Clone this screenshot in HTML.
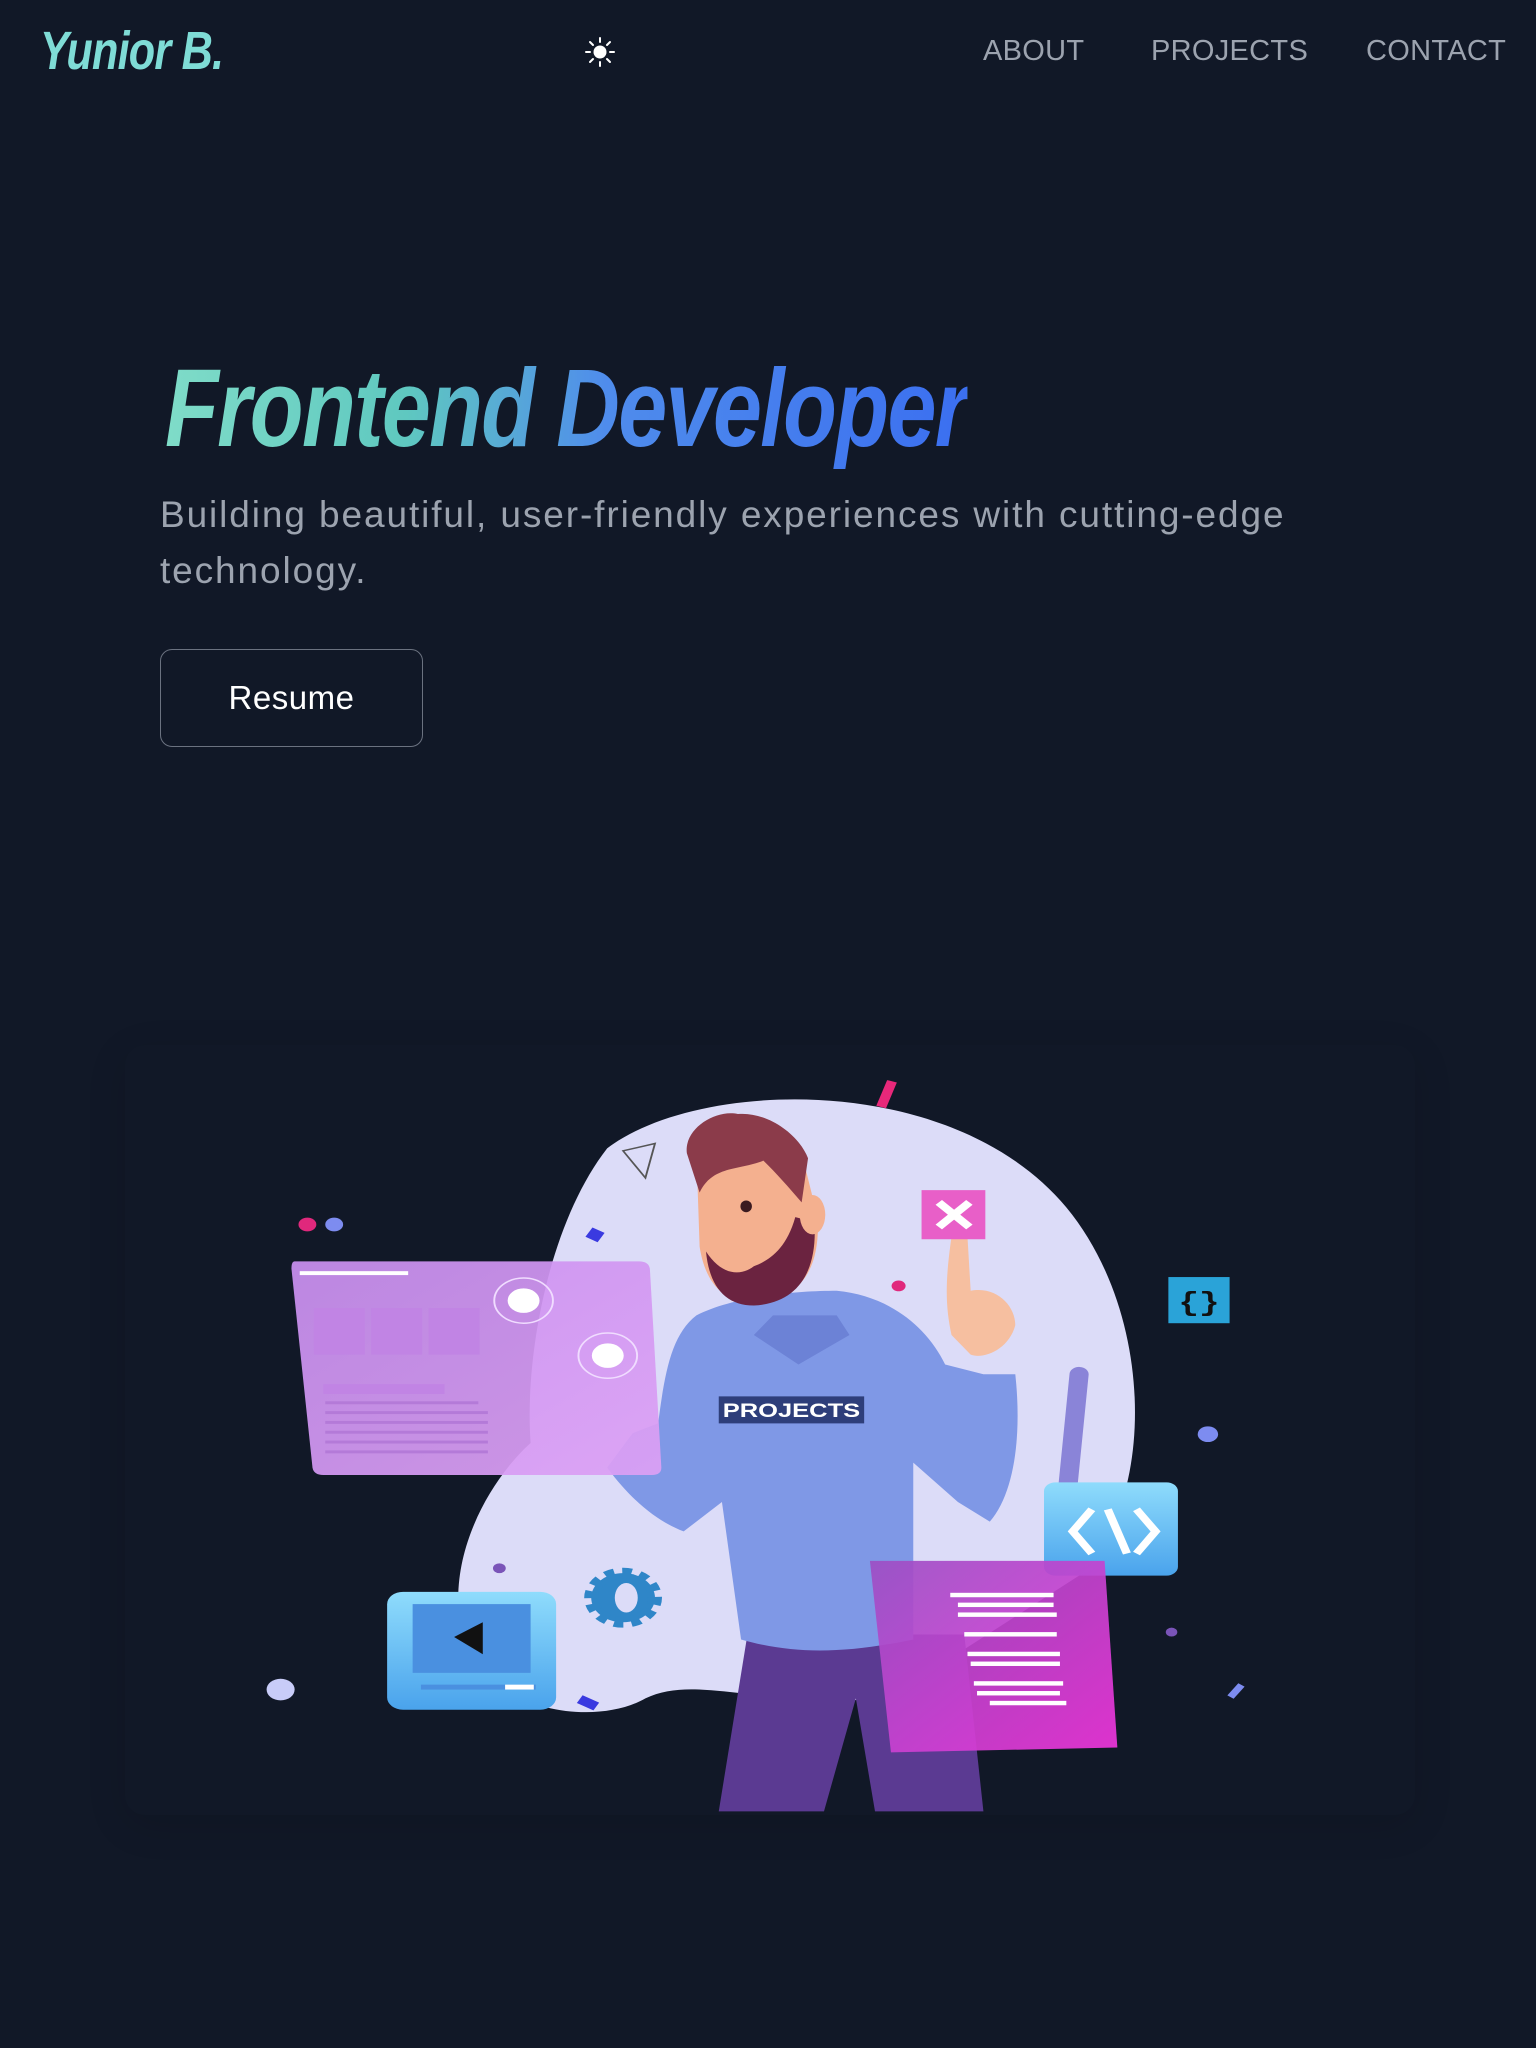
<!DOCTYPE html>
<html><head><meta charset="utf-8"><style>
html,body{margin:0;padding:0;background:#111827;width:1536px;height:2048px;overflow:hidden;font-family:"Liberation Sans",sans-serif}
.abs{position:absolute}
.logo{left:40px;top:20px;font-size:54px;font-weight:bold;font-style:italic;color:#7fdcd6;transform:scaleX(0.8);transform-origin:left;white-space:nowrap;letter-spacing:-1px}
.nav{top:35px;font-size:29px;color:#9ca3af;letter-spacing:0.3px}
.h1{left:165px;top:345px;font-size:110px;font-weight:bold;font-style:italic;white-space:nowrap;transform:scaleX(0.8);transform-origin:left;letter-spacing:-2px;
background:linear-gradient(90deg,#7fdcc8 0%,#5fc8c0 30%,#4f8cec 55%,#3b6ff0 100%);-webkit-background-clip:text;background-clip:text;color:transparent}
.sub{left:160px;top:487px;width:1250px;font-size:37px;line-height:56px;color:#9ca3af;letter-spacing:1.9px}
.btn{left:160px;top:649px;width:263px;height:98px;border:1.5px solid #6b7280;border-radius:12px;color:#fff;font-size:33px;display:flex;align-items:center;justify-content:center;box-sizing:border-box;letter-spacing:0.5px}
</style></head><body>
<div class="abs logo">Yunior B.</div>
<svg class="abs" style="left:584px;top:36px" width="32" height="32" viewBox="0 0 32 32"><g stroke="#fff" stroke-width="2" stroke-linecap="round"><line x1="16" y1="2" x2="16" y2="6"/><line x1="16" y1="26" x2="16" y2="30"/><line x1="2" y1="16" x2="6" y2="16"/><line x1="26" y1="16" x2="30" y2="16"/><line x1="6" y1="6" x2="9" y2="9"/><line x1="23" y1="23" x2="26" y2="26"/><line x1="6" y1="26" x2="9" y2="23"/><line x1="23" y1="9" x2="26" y2="6"/></g><circle cx="16" cy="16" r="6.5" fill="#fff"/></svg>
<div class="abs nav" style="left:983px">ABOUT</div>
<div class="abs nav" style="left:1151px">PROJECTS</div>
<div class="abs nav" style="left:1366px">CONTACT</div>
<div class="abs h1">Frontend Developer</div>
<div class="abs sub">Building beautiful, user-friendly experiences with cutting-edge technology.</div>
<div class="abs btn">Resume</div>
<div class="abs" style="left:125px;top:1045px;width:1290px;height:770px;border-radius:20px;box-shadow:0 10px 40px rgba(0,0,0,0.12)"></div>
<svg class="abs" style="left:250px;top:1060px" width="1000" height="770" viewBox="0 0 1568 1568" preserveAspectRatio="none">
<defs>
<linearGradient id="lp" x1="0" y1="0" x2="1" y2="1"><stop offset="0" stop-color="#c98ff0"/><stop offset="1" stop-color="#dca0f4"/></linearGradient>
<linearGradient id="pd" x1="0" y1="0" x2="1" y2="1"><stop offset="0" stop-color="#9c4fc4"/><stop offset="1" stop-color="#f035dc"/></linearGradient>
<linearGradient id="bl" x1="0" y1="0" x2="0" y2="1"><stop offset="0" stop-color="#8fdcfc"/><stop offset="1" stop-color="#4aa3ec"/></linearGradient>
</defs>
<path d="M560,180 C700,40 1100,20 1280,300 C1420,520 1420,900 1300,1050 L1000,1300 C800,1320 700,1250 620,1300 C540,1360 360,1330 330,1150 C310,1000 380,850 440,780 C430,600 470,330 560,180 Z" fill="#dcdcf8"/>
<rect x="990" y="42" width="16" height="55" fill="#e8287a" transform="rotate(18 998 70)"/>
<path d="M585,185 L635,170 L620,240 Z" fill="none" stroke="#555" stroke-width="3"/>
<circle cx="90" cy="335" r="14" fill="#e0287c"/><circle cx="132" cy="335" r="14" fill="#7d8cf0"/>
<rect x="530" y="345" width="22" height="22" fill="#3a3ae0" transform="rotate(30 541 356)"/>
<circle cx="1017" cy="460" r="11" fill="#e0287c"/>
<path d="M780,1170 L1120,1170 L1150,1530 L980,1530 L950,1300 L900,1530 L735,1530 Z" fill="#5b3a92"/>
<path d="M700,520 C760,480 860,470 920,470 C1000,480 1060,540 1090,620 L1150,640 L1200,640 C1210,760 1200,880 1160,940 L1110,900 L1040,820 L1040,1180 C930,1210 850,1210 770,1180 L740,900 L680,960 C640,940 600,900 560,830 L600,760 L640,740 C650,640 660,560 700,520 Z" fill="#7f98e6"/>
<path d="M790,560 L860,620 L940,560 L920,520 L820,520 Z" fill="#6c82d6"/>
<path d="M700,190 C740,130 840,130 865,190 L890,320 C895,430 860,490 790,495 C735,495 712,440 705,380 Z" fill="#f4b08f"/>
<path d="M685,190 C680,140 730,100 765,110 C810,105 860,150 875,200 L865,290 C845,260 825,230 805,205 C765,225 725,215 705,270 Z" fill="#8b3b4a"/>
<path d="M715,390 C740,440 770,440 790,420 C810,410 840,390 855,320 L885,330 C890,430 860,495 790,500 C745,500 720,460 715,390 Z" fill="#6b2340"/>
<ellipse cx="882" cy="315" rx="20" ry="40" fill="#f4b08f"/>
<ellipse cx="778" cy="298" rx="9" ry="12" fill="#3a1a20"/>
<rect x="735" y="685" width="228" height="55" fill="#2e3e7a"/>
<text x="849" y="727" font-family="Liberation Sans" font-weight="bold" font-size="40" fill="#fff" text-anchor="middle">PROJECTS</text>
<path d="M1100,360 L1125,360 L1130,470 C1170,460 1200,500 1200,540 C1190,590 1150,610 1130,600 L1100,560 C1090,500 1090,450 1100,360 Z" fill="#f6bfa0"/>
<rect x="1053" y="265" width="100" height="100" fill="#e85fc8"/>
<path d="M1080,290 L1128,340 M1128,290 L1080,340" stroke="#fff" stroke-width="14"/>
<path d="M70,410 L610,410 Q625,410 627,425 L645,830 Q645,845 630,845 L115,845 Q100,845 98,830 L65,425 Q65,410 70,410 Z" fill="url(#lp)" opacity="0.93"/>
<rect x="78" y="430" width="170" height="8" fill="#fff"/>
<rect x="100" y="505" width="80" height="95" fill="#c184e4"/><rect x="190" y="505" width="80" height="95" fill="#c184e4"/><rect x="280" y="505" width="80" height="95" fill="#c184e4"/>
<rect x="115" y="660" width="190" height="20" fill="#c184e4"/>
<g fill="#b47ad8"><rect x="118" y="695" width="240" height="6"/><rect x="118" y="715" width="255" height="6"/><rect x="118" y="735" width="255" height="6"/><rect x="118" y="755" width="255" height="6"/><rect x="118" y="775" width="255" height="6"/><rect x="118" y="795" width="255" height="6"/></g>
<circle cx="429" cy="490" r="46" fill="none" stroke="#f0dcff" stroke-width="3"/><circle cx="429" cy="490" r="25" fill="#fff"/>
<circle cx="561" cy="602" r="46" fill="none" stroke="#f0dcff" stroke-width="3"/><circle cx="561" cy="602" r="25" fill="#fff"/>
<rect x="1440" y="442" width="96" height="94" fill="#2aa3d8"/>
<text x="1488" y="510" font-family="Liberation Mono" font-weight="bold" font-size="54" fill="#111" text-anchor="middle">{}</text>
<circle cx="1502" cy="762" r="16" fill="#7d8cf0"/>
<path d="M1300,640 L1280,900" stroke="#8a84d8" stroke-width="30" stroke-linecap="round"/>
<rect x="1245" y="860" width="210" height="190" rx="18" fill="url(#bl)"/>
<path d="M1320,915 L1290,960 L1320,1005 M1390,915 L1420,960 L1390,1005 M1345,915 L1375,1005" stroke="#fff" stroke-width="13" fill="none"/>
<path d="M972,1020 L1340,1020 L1360,1400 L1005,1410 Z" fill="url(#pd)" opacity="0.92"/>
<g fill="#fff"><rect x="1098" y="1085" width="162" height="9"/><rect x="1110" y="1105" width="150" height="9"/><rect x="1110" y="1125" width="155" height="9"/><rect x="1120" y="1165" width="145" height="9"/><rect x="1125" y="1205" width="145" height="9"/><rect x="1130" y="1225" width="140" height="9"/><rect x="1135" y="1265" width="140" height="9"/><rect x="1140" y="1285" width="130" height="9"/><rect x="1160" y="1305" width="120" height="9"/></g>
<rect x="215" y="1083" width="265" height="240" rx="25" fill="url(#bl)"/>
<rect x="255" y="1108" width="185" height="140" fill="#4a90e0"/>
<path d="M365,1145 L320,1175 L365,1210 Z" fill="#111"/>
<rect x="268" y="1272" width="180" height="10" fill="#4a90e0"/><rect x="400" y="1272" width="45" height="10" fill="#fff"/>
<circle cx="585" cy="1095" r="50" fill="#2f86c8" stroke="#2f86c8" stroke-width="22" stroke-dasharray="14 12"/>
<ellipse cx="590" cy="1095" rx="18" ry="30" fill="#dcdcf8"/>
<circle cx="48" cy="1282" r="22" fill="#c8ccf8"/>
<circle cx="391" cy="1035" r="10" fill="#7a54b8"/>
<circle cx="1445" cy="1165" r="9" fill="#7a54b8"/>
<rect x="515" y="1300" width="30" height="18" fill="#3a3ae0" transform="rotate(30 530 1309)"/>
<rect x="1540" y="1270" width="12" height="30" fill="#7d8cf0" transform="rotate(35 1546 1285)"/>
</svg>
</body></html>
